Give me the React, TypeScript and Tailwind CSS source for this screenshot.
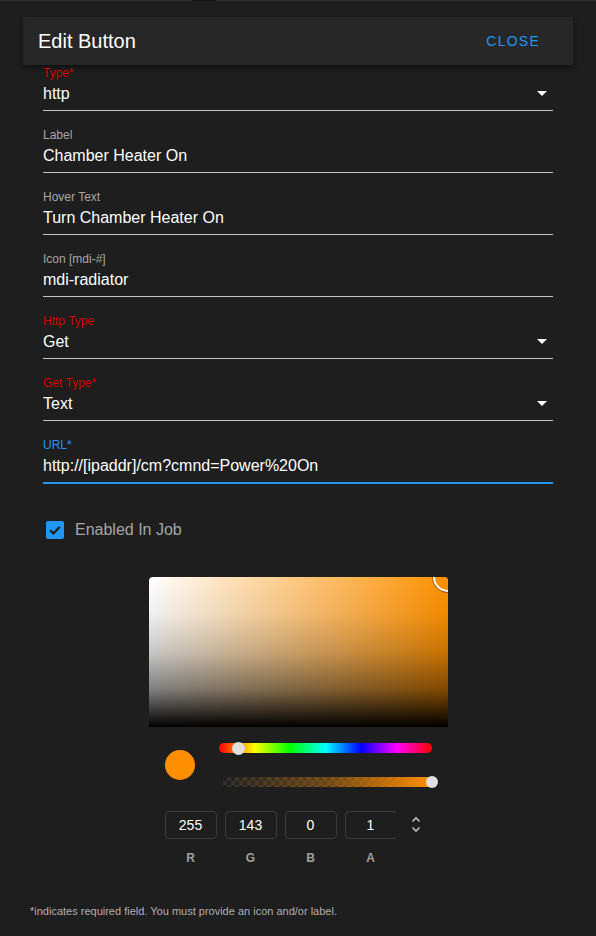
import React from "react";

function Caret() {
  return (
    <svg width="10" height="5" viewBox="0 0 10 5" className="mb-[1px]">
      <path d="M0 0 L10 0 L5 5 Z" fill="#ffffff" />
    </svg>
  );
}

type FieldProps = {
  label: string;
  value: string;
  labelColor: string;
  select?: boolean;
  first?: boolean;
  active?: boolean;
};

function Field({ label, value, labelColor, select, first, active }: FieldProps) {
  return (
    <div className={first ? "mt-[1px] flex flex-col" : "mt-[17px] flex flex-col"}>
      <div className={"h-[14px] text-[12px] leading-[14px] " + labelColor}>{label}</div>
      <div className="mt-[2px] flex h-[24px] items-center justify-between">
        <span className="text-[16px] leading-[24px] text-white">{value}</span>
        {select ? (
          <span className="mr-[6px] flex items-center">
            <Caret />
          </span>
        ) : null}
      </div>
      <div className={active ? "mt-[4px] h-[2px] bg-[#2196f3]" : "mt-[4px] h-px bg-[#c4c4c4]"} />
    </div>
  );
}

export default function App() {
  const inputs = [
    { v: "255", l: "R" },
    { v: "143", l: "G" },
    { v: "0", l: "B" },
    { v: "1", l: "A" },
  ];
  return (
    <div className="flex h-[936px] w-[596px] flex-col overflow-hidden bg-[#1e1e1e] [font-family:'Liberation_Sans',Arial,sans-serif]">
      <div className="flex h-px">
        <div className="w-[192px] bg-[#2e2e2e]" />
        <div className="w-[24px] bg-[#161616]" />
        <div className="flex-1 bg-[#2e2e2e]" />
      </div>

      <div className="mx-[23px] mt-[16px] flex h-[48px] items-center justify-between bg-[#272727] pl-[15px] pr-[33px] shadow-[0_3px_5px_rgba(0,0,0,0.45)]">
        <span className="text-[20px] leading-[24px] text-white">Edit Button</span>
        <span className="text-[14px] tracking-[1.25px] text-[#2196f3]">CLOSE</span>
      </div>

      <div className="flex flex-col px-[43px]">
        <Field first label="Type*" value="http" labelColor="text-[#d40000]" select />
        <Field label="Label" value="Chamber Heater On" labelColor="text-[#a8a8a8]" />
        <Field label="Hover Text" value="Turn Chamber Heater On" labelColor="text-[#a8a8a8]" />
        <Field label="Icon [mdi-#]" value="mdi-radiator" labelColor="text-[#a8a8a8]" />
        <Field label="Http Type" value="Get" labelColor="text-[#d40000]" select />
        <Field label="Get Type*" value="Text" labelColor="text-[#d40000]" select />
        <Field label="URL*" value="http://[ipaddr]/cm?cmnd=Power%20On" labelColor="text-[#2196f3]" active />
      </div>

      <div className="ml-[46px] mt-[36px] flex items-center">
        <div className="flex h-[18px] w-[18px] items-center justify-center rounded-[2px] bg-[#2196f3]">
          <svg width="14" height="14" viewBox="0 0 14 14">
            <path d="M2.2 7.2 L5.5 10.4 L11.8 3.8" stroke="#1e1e1e" strokeWidth="2.2" fill="none" />
          </svg>
        </div>
        <span className="ml-[11px] text-[16px] leading-[20px] text-[#a6a6a6]">Enabled In Job</span>
      </div>

      <div className="mx-auto mt-[37px] flex w-[299px] flex-col">
        <div className="relative h-[150px] w-[299px] overflow-hidden rounded-t-[4px] bg-[linear-gradient(to_top,#000_0%,rgba(0,0,0,0.8)_10%,rgba(0,0,0,0.5)_25%,rgba(0,0,0,0.22)_50%,rgba(0,0,0,0.06)_75%,rgba(0,0,0,0)_100%),linear-gradient(to_right,#fff,#ff9100)]">
          <div className="absolute right-[-15px] top-[-15px] h-[30px] w-[30px] rounded-full border-2 border-white bg-[#ff9100] shadow-[0_0_0_1px_rgba(0,0,0,0.35)]" />
        </div>

        <div className="mt-[16px] flex items-center px-[16px]">
          <div className="h-[30px] w-[30px] rounded-full bg-[#ff8f00]" />
          <div className="ml-[24px] flex h-[44px] flex-1 flex-col justify-between">
            <div className="relative h-[10px] rounded-full bg-[linear-gradient(to_right,#f00,#ff0,#0f0,#0ff,#00f,#f0f,#f00)]">
              <div className="absolute left-[13px] top-[-1px] h-[13px] w-[13px] rounded-full bg-[#e0e0e0]" />
            </div>
            <div className="relative ml-[4px] h-[10px]">
              <div className="absolute inset-0 bg-[repeating-conic-gradient(#2f2f2f_0_25%,#1e1e1e_0_50%)] bg-[length:8px_8px]" />
              <div className="absolute inset-0 bg-[linear-gradient(to_right,rgba(255,143,0,0),rgba(255,143,0,0.35)_50%,#ff8f00)]" />
              <div className="absolute right-[-6px] top-[-1px] h-[12px] w-[12px] rounded-full bg-[#e0e0e0]" />
            </div>
          </div>
        </div>

        <div className="mt-[24px] flex items-start px-[16px]">
          {inputs.map((it, i) => (
            <div key={it.l} className={i === 0 ? "flex flex-col items-center" : "ml-[8px] flex flex-col items-center"}>
              <div
                className={
                  "flex h-[28px] w-[52px] items-center justify-center rounded-[4px] border border-[#3c3c3c] text-[14px] text-white " +
                  (i === 3 ? "border-r-transparent" : "")
                }
              >
                {it.v}
              </div>
              <div className="mt-[12px] text-[12px] font-bold leading-[14px] text-[#a0a0a0]">{it.l}</div>
            </div>
          ))}
          <div className="ml-[14px] mt-[5px] flex flex-col items-center gap-[3px]">
            <svg width="10" height="7" viewBox="0 0 10 7">
              <path d="M1.5 5.5 L5 2 L8.5 5.5" stroke="#c0c0c0" strokeWidth="1.6" fill="none" />
            </svg>
            <svg width="10" height="7" viewBox="0 0 10 7">
              <path d="M1.5 1.5 L5 5 L8.5 1.5" stroke="#c0c0c0" strokeWidth="1.6" fill="none" />
            </svg>
          </div>
        </div>
      </div>

      <div className="ml-[30px] mt-[40px] text-[11px] leading-[13px] text-[#b0b0b0]">
        *indicates required field. You must provide an icon and/or label.
      </div>
    </div>
  );
}
